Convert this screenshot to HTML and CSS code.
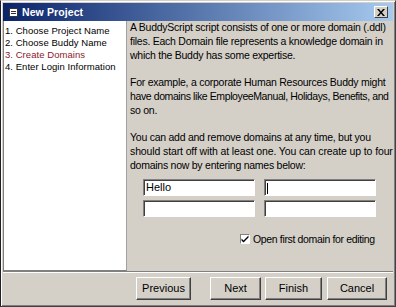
FILE: index.html
```html
<!DOCTYPE html>
<html>
<head>
<meta charset="utf-8">
<link rel="stylesheet" href="styles.css">
</head>
<body>
<div class="window">
  <div class="titlebar">
    <span class="ticon"><svg width="9" height="9" viewBox="0 0 9 9"><rect x="0.5" y="0.5" width="8" height="8" fill="#fff" stroke="#333"/><rect x="2" y="3" width="5" height="1" fill="#333"/><rect x="2" y="5" width="5" height="1" fill="#333"/></svg></span>
    <span class="title">New Project</span>
    <span class="close"><svg width="8" height="7" viewBox="0 0 8 7"><path d="M0 0h2l2 2.5L6 0h2L5 3.5 8 7H6L4 4.5 2 7H0l3-3.5z" fill="#000"/></svg></span>
  </div>
  <div class="main">
    <div class="steps">
      <div class="step">1. Choose Project Name</div>
      <div class="step">2. Choose Buddy Name</div>
      <div class="step current">3. Create Domains</div>
      <div class="step">4. Enter Login Information</div>
    </div>
    <div class="content">
      <p>A BuddyScript script consists of one or more domain (.ddl)<br>files. Each Domain file represents a knowledge domain in<br>which the Buddy has some expertise.</p>
      <p>For example, a corporate Human Resources Buddy might<br><span class="tight">have domains like EmployeeManual, Holidays, Benefits, and</span><br>so on.</p>
      <p class="last">You can add and remove domains at any time, but you<br><span class="loose">should start off with at least one. You can create up to four</span><br>domains now by entering names below:</p>
      <div class="fields">
        <div class="field">Hello</div>
        <div class="field"><span class="caret"></span></div>
        <div class="field"></div>
        <div class="field"></div>
      </div>
      <div class="check">
        <span class="box"><svg width="8" height="8" viewBox="0 0 8 8"><path d="M0.5 3.5l2 2 5-5v2L2.5 7.5 0.5 5.5z" fill="#000"/></svg></span>
        <span>Open first domain for editing</span>
      </div>
    </div>
  </div>
  <div class="buttons">
    <div class="btn prev">Previous</div>
    <div class="btn next">Next</div>
    <div class="btn finish">Finish</div>
    <div class="btn cancel">Cancel</div>
  </div>
</div>
</body>
</html>
```
FILE: styles.css
```css
html, body { margin: 0; padding: 0; }
body { width: 396px; height: 307px; overflow: hidden; background: #d4d0c8; font-family: "Liberation Sans", Arial, sans-serif; }
.window {
  box-sizing: border-box; width: 396px; height: 307px;
  background: #d4d0c8;
  border: 1px solid #404040;
  border-top-color: #d4d0c8; border-left-color: #202020;
  box-shadow: inset 1px 1px 0 #fff, inset -1px -1px 0 #808080;
  padding: 2px 2px 0 2px;
  display: flex; flex-direction: column;
}
.titlebar {
  height: 18px; display: flex; align-items: center;
  background: linear-gradient(to right, #0a246a, #a6caf0);
  color: #fff; padding: 0 2px 0 6px;
}
.ticon { width: 9px; height: 9px; display: flex; margin-right: 4px; }
.title { font-weight: bold; font-size: 10.5px; flex: 1; letter-spacing: 0.1px; }
.close {
  width: 14px; height: 12px; box-sizing: border-box; background: #d4d0c8;
  border: 1px solid; border-color: #fff #404040 #404040 #fff;
  display: flex; align-items: center; justify-content: center; margin-right: 3px;
}
.main { display: flex; height: 250px; }
.steps {
  width: 124px; flex: none; background: #fff; box-sizing: border-box;
  border-left: 1px solid #808080; border-bottom: 1px solid #808080; border-right: 1px solid #a0a0a0;
  padding: 4px 0 0 1px;
}
.step { font-size: 9.5px; line-height: 12px; color: #000; letter-spacing: 0.05px; white-space: nowrap; }
.step.current { color: #8b1a2b; }
.content { flex: 1; padding: 0 0 0 3px; font-size: 10.5px; letter-spacing: -0.25px; color: #000; white-space: nowrap; }
.content p { margin: 0 0 13px 0; line-height: 14px; }
.content p:first-child { margin-top: -1px; }
.content p.last { margin-bottom: 0; }
.tight { letter-spacing: -0.4px; }
.loose { letter-spacing: -0.12px; }
.fields { display: grid; grid-template-columns: 112px 112px; column-gap: 9px; row-gap: 4px; margin: 7px 0 0 13px; letter-spacing: 0; }
.field {
  height: 17px; box-sizing: border-box; background: #fff;
  border: 1px solid; border-color: #808080 #fff #fff #808080;
  box-shadow: inset 1px 1px 0 #404040;
  font-size: 11px; line-height: 15px; padding-left: 2px;
}
.caret { display: inline-block; width: 1px; height: 11px; background: #000; vertical-align: middle; }
.check { display: flex; align-items: center; margin: 16px 0 0 110px; font-size: 10.5px; letter-spacing: -0.35px; }
.box { width: 10px; height: 10px; box-sizing: border-box; background: #fff; border: 1px solid; border-color: #808080 #fff #fff #808080; display: flex; align-items: center; justify-content: center; margin-right: 3px; }
.buttons {
  border-top: 1px solid #808080; box-shadow: inset 0 1px 0 #fff;
  display: flex; padding: 5px 0 0 133px; gap: 0;
}
.btn {
  height: 23px; box-sizing: border-box; font-size: 11px; text-align: center; line-height: 21px;
  border: 1px solid; border-color: #fff #404040 #404040 #fff;
  box-shadow: inset -1px -1px 0 #808080;
}
.prev { width: 55px; margin-right: 19px; }
.next { width: 51px; margin-right: 4px; }
.finish { width: 57px; margin-right: 5px; }
.cancel { width: 60px; }
```
